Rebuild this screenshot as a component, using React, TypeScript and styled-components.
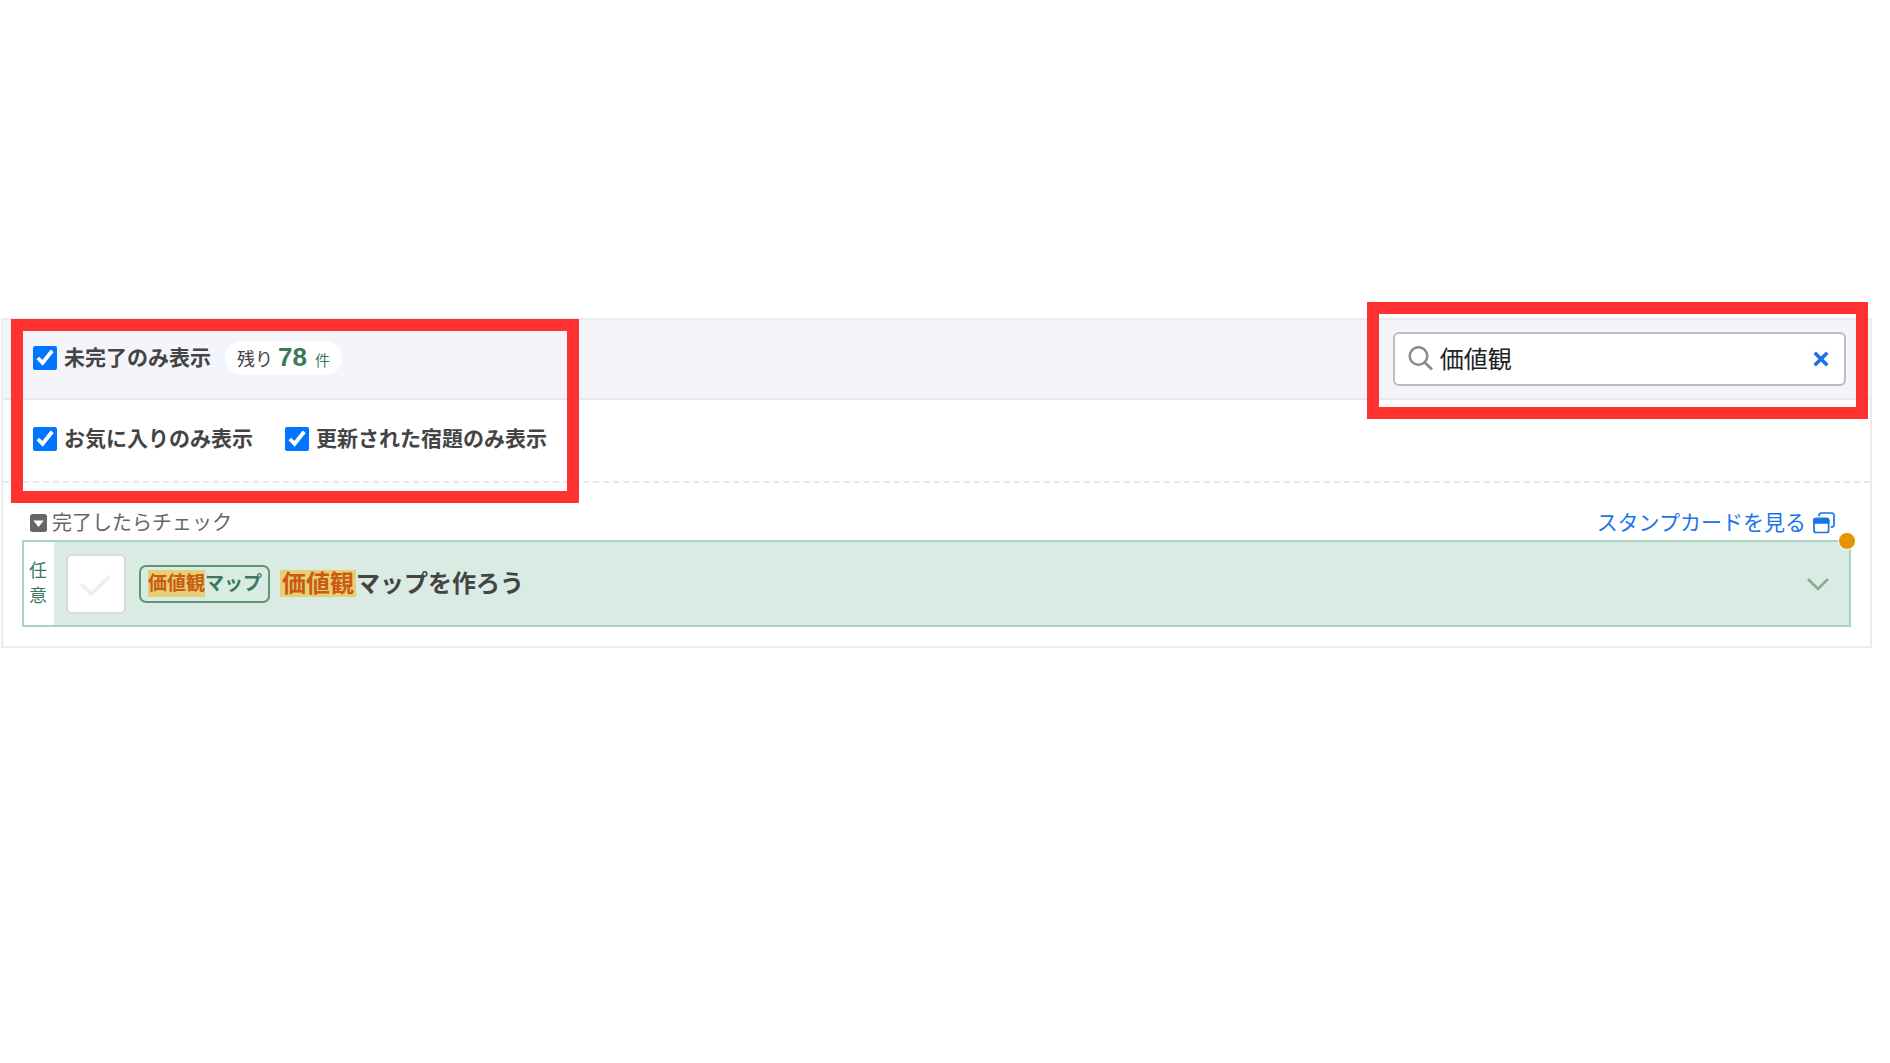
import React, { useState } from "react";
import styled, { createGlobalStyle } from "styled-components";

const GlobalStyle = createGlobalStyle`
  *, *::before, *::after { box-sizing: border-box; }
  body {
    margin: 0;
    background: #fff;
    color: #444;
    font-family: "Liberation Sans", "Noto Sans CJK JP", sans-serif;
  }
`;

const Page = styled.main`
  min-height: 100vh;
  padding: 318px 18px 0 1px;
`;

const Panel = styled.section`
  position: relative;
  border: 2px solid #ececec;
  background: #fff;
`;

const Header = styled.header`
  display: flex;
  align-items: center;
  justify-content: space-between;
  height: 80px;
  padding: 0 24px 0 30px;
  background: #f4f5fa;
  border-bottom: 2px solid #e8e8e8;
`;

const Filters = styled.div`
  display: flex;
  align-items: center;
  gap: 32px;
  height: 83px;
  padding: 0 30px 4px;
  border-bottom: 2px dashed #e8e8e8;
`;

const Group = styled.div`
  display: flex;
  align-items: center;
  gap: 14px;
  padding-bottom: 2px;
`;

const FilterLabel = styled.label`
  display: flex;
  align-items: center;
  gap: 7px;
  font-size: 21px;
  line-height: 28px;
  font-weight: 700;
`;

const Tick = styled.input`
  width: 24px;
  height: 24px;
  margin: 0;
  accent-color: #0075ff;
`;

const Remaining = styled.p`
  display: flex;
  align-items: baseline;
  gap: 5px;
  height: 34px;
  margin: 0;
  padding: 0 12px;
  border-radius: 17px;
  background: #fff;
  font-size: 18px;
  line-height: 32px;
`;

const Count = styled.strong`
  color: #3b7a5a;
  font-size: 26px;
`;

const Unit = styled.span`
  padding-left: 3px;
  color: #3b7a5a;
  font-size: 15px;
`;

const SearchBox = styled.div`
  display: flex;
  align-items: center;
  gap: 7px;
  width: 25%;
  min-width: 280px;
  height: 54px;
  padding: 0 15px 0 13px;
  border: 2px solid #bdbdbd;
  border-radius: 6px;
  background: #fff;
`;

const SearchInput = styled.input`
  flex: 1;
  min-width: 0;
  padding: 0 0 4px;
  border: 0;
  outline: 0;
  background: transparent;
  color: #222;
  font: inherit;
  font-size: 24px;
`;

const IconButton = styled.button`
  display: flex;
  padding: 0;
  border: 0;
  background: transparent;
  cursor: pointer;
`;

const List = styled.div`
  padding: 19px;
`;

const ListHead = styled.div`
  display: flex;
  align-items: center;
  justify-content: space-between;
  height: 38px;
  padding: 4px 16px 0 8px;
`;

const Hint = styled.p`
  display: flex;
  align-items: center;
  gap: 5px;
  margin: 0;
  color: #666;
  font-size: 20px;
  line-height: 30px;
`;

const CardLink = styled.a`
  display: flex;
  align-items: center;
  gap: 7px;
  color: #1a73e8;
  font-size: 21px;
  line-height: 30px;
  text-decoration: none;
`;

const Task = styled.article`
  position: relative;
  display: flex;
  align-items: center;
  height: 87px;
  border: 2px solid #a9d4c1;
  background: #daebe3;
`;

const Kind = styled.span`
  display: flex;
  flex-direction: column;
  align-items: center;
  justify-content: center;
  align-self: stretch;
  width: 30px;
  padding-right: 2px;
  background: #fff;
  color: #3b7a5a;
  font-size: 18px;
  line-height: 25px;
`;

const Done = styled.label`
  position: relative;
  display: flex;
  width: 60px;
  height: 60px;
  margin: 0 13px 0 12px;
`;

const DoneInput = styled.input`
  appearance: none;
  width: 60px;
  height: 60px;
  margin: 0;
  border: 2px solid #d9d9d9;
  border-radius: 6px;
  background: #fff;
`;

const DoneMark = styled.svg`
  position: absolute;
  inset: 0;
  pointer-events: none;
`;

const Tag = styled.span`
  display: flex;
  align-items: center;
  height: 38px;
  margin-right: 10px;
  padding: 0 6px 0 7px;
  border: 2px solid #5e9478;
  border-radius: 7px;
  color: #3b7a5a;
  font-size: 19px;
  line-height: 27px;
  font-weight: 700;
`;

const Hit = styled.mark`
  background: #e6cf74;
  color: #c95b13;
`;

const Title = styled.h2`
  display: flex;
  align-items: center;
  margin: 0;
  padding-bottom: 1px;
  font-size: 24px;
  line-height: 27px;
  font-weight: 700;

  ${Hit} {
    padding: 0 2px;
  }
`;

const Toggle = styled(IconButton)`
  margin: 0 20px 0 auto;
`;

const Dot = styled.span`
  position: absolute;
  top: -10px;
  right: -7px;
  width: 18px;
  height: 18px;
  border: 1px solid #fff;
  border-radius: 50%;
  background: #e59400;
`;

const Highlight = styled.div<{ $side: "left" | "right" }>`
  position: absolute;
  border: 12px solid #ff3131;
  pointer-events: none;
  ${({ $side }) =>
    $side === "left"
      ? "top: -1px; left: 8px; width: 568px; height: 184px;"
      : "top: -18px; right: 2px; width: 501px; height: 117px;"}
`;

function Filter({ text }: { text: string }) {
  return (
    <FilterLabel>
      <Tick type="checkbox" defaultChecked />
      {text}
    </FilterLabel>
  );
}

export default function App() {
  const [query, setQuery] = useState("価値観");
  return (
    <Page>
      <GlobalStyle />
      <Panel>
        <Header>
          <Group>
            <Filter text="未完了のみ表示" />
            <Remaining>
              残り<Count>78</Count>
              <Unit>件</Unit>
            </Remaining>
          </Group>
          <SearchBox>
            <svg width="25" height="26" viewBox="0 0 25 26" fill="none" stroke="#8a8a8a" strokeWidth="2.5" aria-hidden="true">
              <circle cx="10.5" cy="10" r="8.8" />
              <path d="M16.6 16.2 L24 23.4" strokeWidth="2.8" />
            </svg>
            <SearchInput
              type="text"
              aria-label="検索"
              value={query}
              onChange={(e) => setQuery(e.target.value)}
            />
            <IconButton type="button" aria-label="クリア" onClick={() => setQuery("")}>
              <svg width="16" height="16" viewBox="0 0 16 16" stroke="#1a73e8" strokeWidth="3.6" aria-hidden="true">
                <path d="M1.7 1.7 L14.3 14.3 M14.3 1.7 L1.7 14.3" />
              </svg>
            </IconButton>
          </SearchBox>
        </Header>
        <Filters>
          <Filter text="お気に入りのみ表示" />
          <Filter text="更新された宿題のみ表示" />
        </Filters>
        <List>
          <ListHead>
            <Hint>
              <svg width="17" height="18" viewBox="0 0 17 18" aria-hidden="true">
                <rect width="17" height="18" rx="2.5" fill="#666" />
                <path d="M3.3 6.5 H13.7 L8.5 13 Z" fill="#fff" />
              </svg>
              完了したらチェック
            </Hint>
            <CardLink href="#stamp">
              スタンプカードを見る
              <svg width="22" height="22" viewBox="0 0 22 22" fill="none" stroke="#1a73e8" strokeWidth="1.7" aria-hidden="true">
                <path d="M6 4.2 V3.6 Q6 1 8.6 1 H18.4 Q21 1 21 3.6 V12.4 Q21 15 18.4 15 H17.6" />
                <rect x="1" y="6.5" width="14.6" height="14" rx="2" />
                <path d="M1 11 V8.5 Q1 6.5 3 6.5 H13.6 Q15.6 6.5 15.6 8.5 V11 Z" fill="#1a73e8" />
              </svg>
            </CardLink>
          </ListHead>
          <Task>
            <Kind>
              <span>任</span>
              <span>意</span>
            </Kind>
            <Done>
              <DoneInput type="checkbox" aria-label="完了" />
              <DoneMark width="60" height="60" viewBox="0 0 60 60" fill="none" stroke="#eee" strokeWidth="3.5" aria-hidden="true">
                <path d="M15.5 30.5 L25.5 40 L43.5 22" />
              </DoneMark>
            </Done>
            <Tag>
              <Hit>価値観</Hit>マップ
            </Tag>
            <Title>
              <Hit>価値観</Hit>マップを作ろう
            </Title>
            <Toggle type="button" aria-label="詳細を開く">
              <svg width="22" height="14" viewBox="0 0 22 14" fill="none" stroke="#86ab98" strokeWidth="2.5" aria-hidden="true">
                <path d="M1 2 L11 12 L21 2" />
              </svg>
            </Toggle>
            <Dot />
          </Task>
        </List>
        <Highlight $side="left" />
        <Highlight $side="right" />
      </Panel>
    </Page>
  );
}
